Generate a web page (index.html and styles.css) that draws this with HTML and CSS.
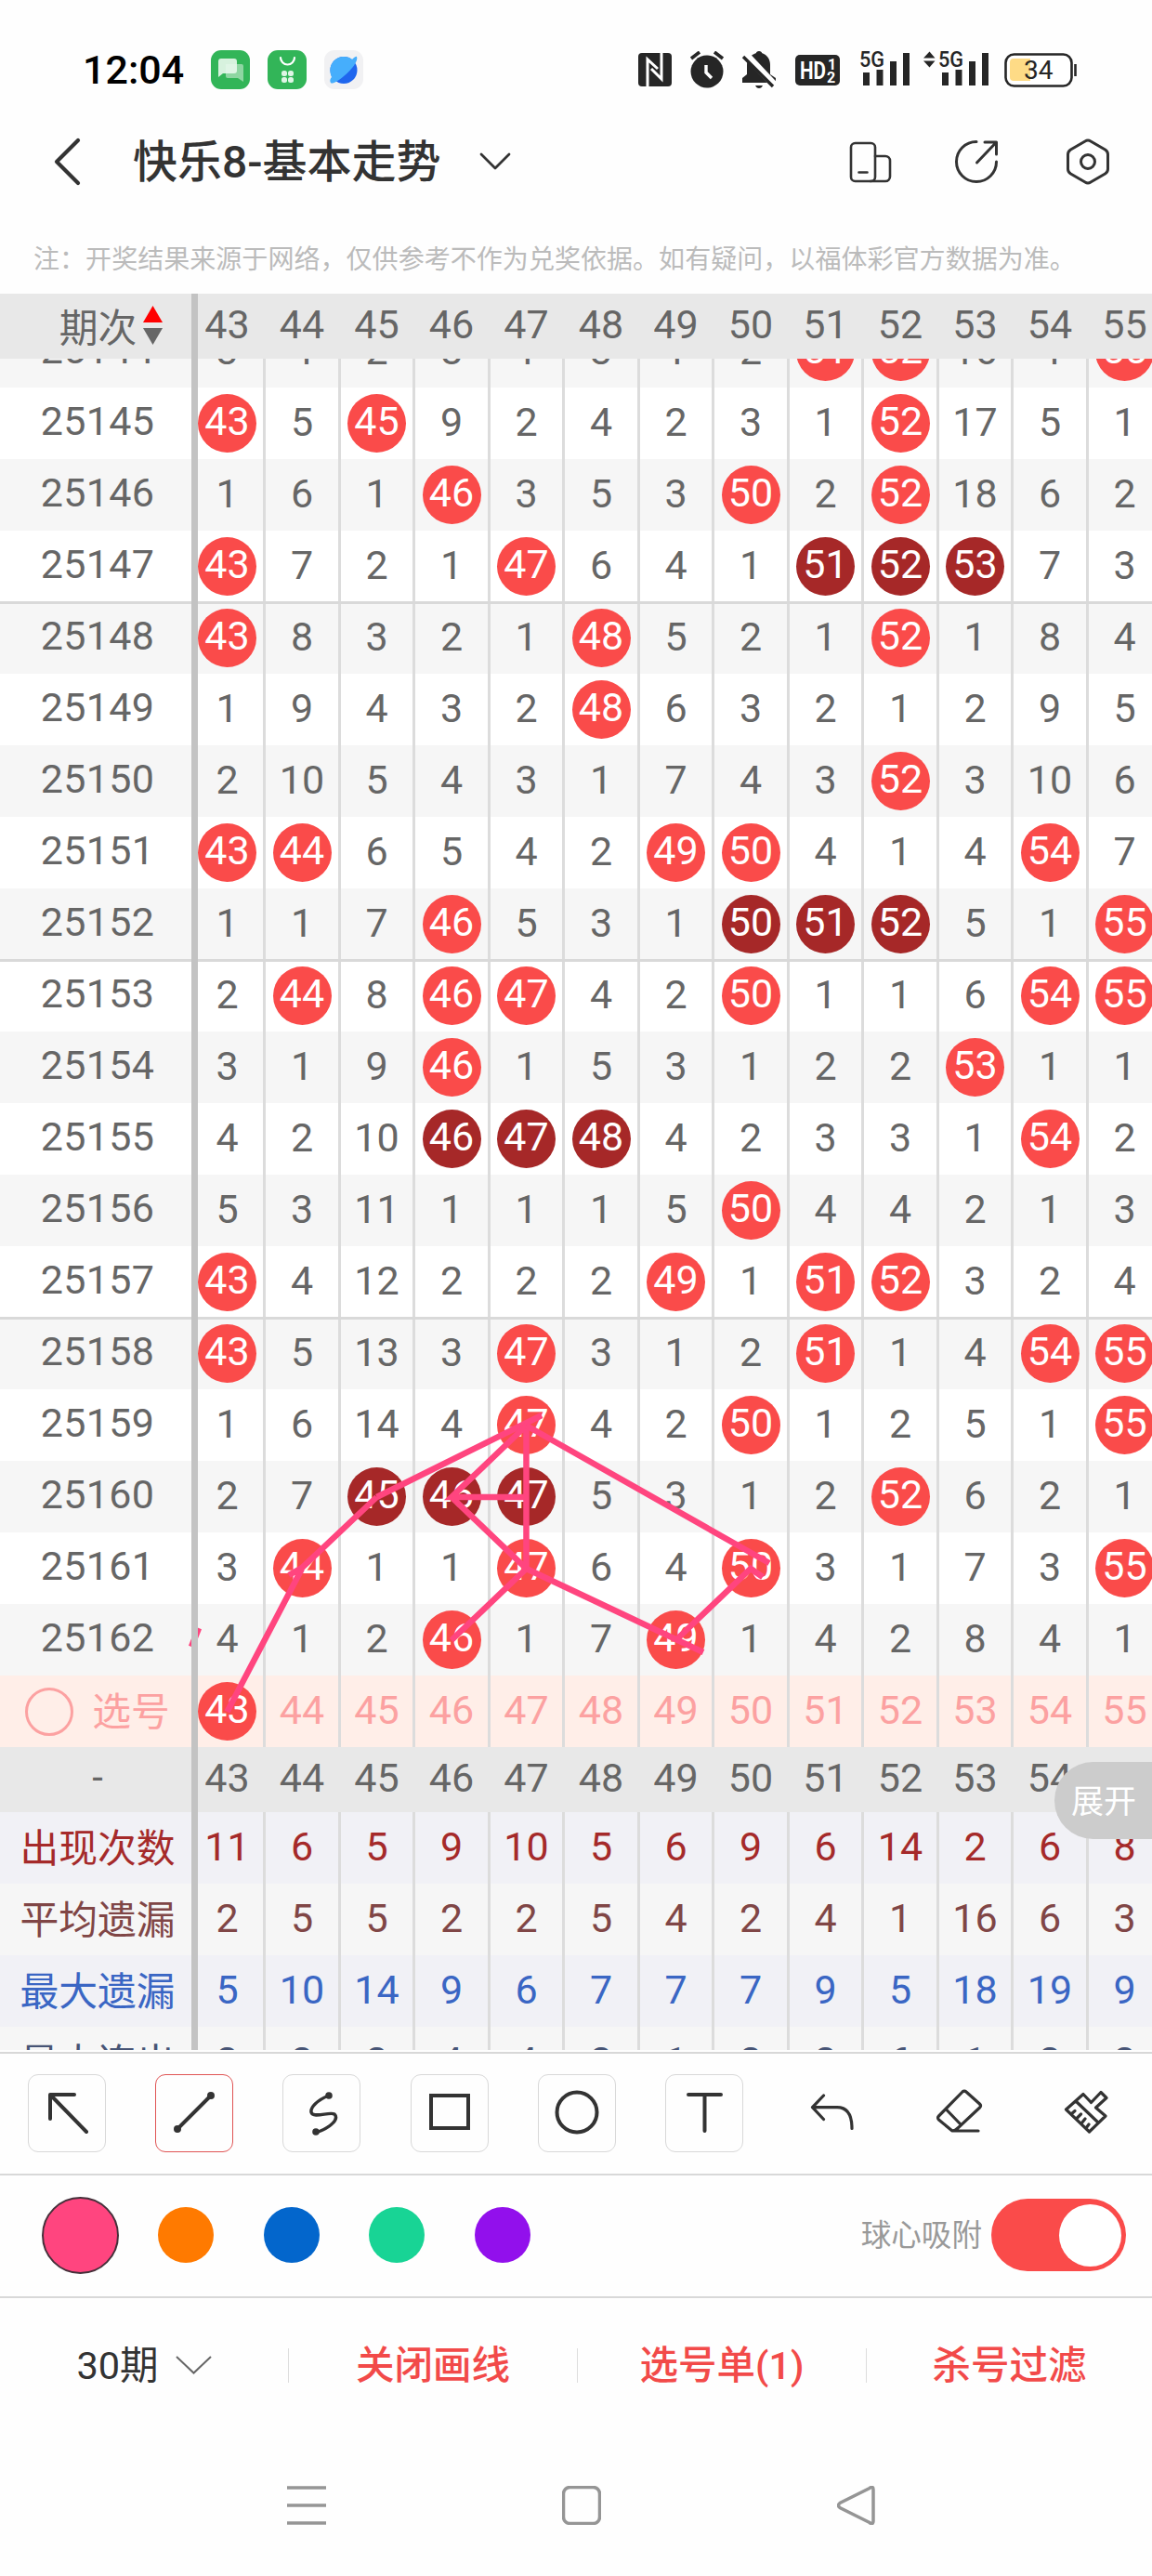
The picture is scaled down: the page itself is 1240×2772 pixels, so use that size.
FILE: index.html
```html
<!DOCTYPE html>
<html lang="zh-CN">
<head>
    <meta charset="UTF-8">
    <meta name="viewport" content="width=device-width, initial-scale=1.0">
    <title>快乐8-基本走势</title>
    <link rel="stylesheet" href="styles.css">
</head>
<body>
    <div class="status-bar">
        <span class="time">12:04</span>
        <div class="app-icons">
            <svg width="42" height="42" viewBox="0 0 42 42">
                <rect width="42" height="42" rx="11" fill="#32b558"/>
                <path d="M16 15h17a2 2 0 0 1 2 2v17l-6-4H18a2 2 0 0 1-2-2z" fill="#8ed6a2"/>
                <path d="M11 9h14a3 3 0 0 1 3 3v10a3 3 0 0 1-3 3H13l-5 4V12a3 3 0 0 1 3-3z" fill="#e9f8ed" opacity=".9"/>
            </svg>
            <svg width="42" height="42" viewBox="0 0 42 42">
                <rect width="42" height="42" rx="11" fill="#32b558"/>
                <path d="M14 8a7.4 7.4 0 0 0 15 0" fill="none" stroke="#fff" stroke-width="2.2" stroke-linecap="round"/>
                <g fill="#dff5e5">
                    <rect x="15" y="22" width="6" height="6" rx="2.5"/>
                    <rect x="22" y="22" width="6" height="6" rx="2.5"/>
                    <rect x="15" y="29" width="6" height="6" rx="2.5"/>
                    <rect x="22" y="29" width="6" height="6" rx="2.5"/>
                </g>
            </svg>
            <svg width="42" height="42" viewBox="0 0 42 42">
                <rect width="42" height="42" rx="11" fill="#f1f1f3"/>
                <circle cx="21" cy="21.5" r="14.5" fill="#1f66ee"/>
                <path d="M35 7c2 4-5 14-14 21-7 6-13 9-14 7-2-3 1-6 1-6-5-12 3-22 13-22 4 0 7 1 9 3 0 0 4-4 5-3z" fill="#46aefc"/>
            </svg>
        </div>
        <div class="system-icons">
            <svg class="nfc" width="36" height="36" viewBox="0 0 36 36">
                <rect width="36" height="36" rx="4" fill="#262626"/>
                <path d="M10 36V7l11 10M25 0v28L14 17" fill="none" stroke="#fff" stroke-width="3"/>
            </svg>
            <svg class="alarm" width="38" height="40" viewBox="0 0 38 40">
                <circle cx="19" cy="22" r="17.5" fill="#262626"/>
                <path d="M2 8l9-7M36 8l-9-7" stroke="#262626" stroke-width="3.6"/>
                <path d="M18 15v8l6 6" fill="none" stroke="#fff" stroke-width="3.4"/>
            </svg>
            <svg class="bell" width="38" height="40" viewBox="0 0 38 40">
                <path d="M19 0c2 0 3 1 3 2 6 2 9 7 9 13v10l6 4v5H1v-5l5-4V15c0-6 4-11 10-13 0-1 1-2 3-2zM15 37h8c-1 2-2 3-4 3s-3-1-4-3z" fill="#262626"/>
                <path d="M4 3l33 35" stroke="#fff" stroke-width="8"/>
                <path d="M2 6l32 32" stroke="#262626" stroke-width="3.4"/>
            </svg>
            <svg class="hd" width="48" height="33" viewBox="0 0 48 33">
                <rect width="48" height="33" rx="5" fill="#262626"/>
                <text x="5" y="26" font-size="26" textLength="28" lengthAdjust="spacingAndGlyphs">HD</text>
                <text x="35" y="16" font-size="16">1</text>
                <text x="34" y="30" font-size="16">2</text>
            </svg>
            <svg class="signal" width="56" height="40" viewBox="0 0 56 40">
                <text x="0" y="18" font-size="24" textLength="27" lengthAdjust="spacingAndGlyphs">5G</text>
                <path d="M4 24h7v14H4zM18.500 21h7v17h-7zM33 12h7v26h-7zM47 3h7v35h-7z" fill="#262626"/>
            </svg>
            <svg class="signal second" width="72" height="40" viewBox="0 0 72 40">
                <path d="M6.500 1.500l6 7H0zM6.500 18.500l6-7H0z" fill="#262626"/>
                <text x="16" y="18" font-size="24" textLength="27" lengthAdjust="spacingAndGlyphs">5G</text>
                <path d="M20 24h7v14h-7zM34.500 21h7v17h-7zM49 12h7v26h-7zM63 3h7v35h-7z" fill="#262626"/>
            </svg>
            <svg class="battery" width="79" height="37" viewBox="0 0 79 37">
                <rect x="1.500" y="1.500" width="71" height="34" rx="9" fill="#fff" stroke="#262626" stroke-width="2.600"/>
                <path d="M10 6h18v24H10a4 4 0 0 1-4-4V10a4 4 0 0 1 4-4z" fill="#fedb86"/>
                <path d="M76.500 12v13" stroke="#262626" stroke-width="2.600"/>
                <text x="21" y="28" font-size="28">34</text>
            </svg>
        </div>
    </div>

    <header class="title-bar">
        <svg class="back" width="30" height="52" viewBox="0 0 30 52">
            <path d="M26 3L3 26l23 23" fill="none" stroke="#333" stroke-width="4.200" stroke-linecap="round" stroke-linejoin="round"/>
        </svg>
        <h1>快乐8-基本走势</h1>
        <svg class="drop" width="34" height="20" viewBox="0 0 34 20">
            <path d="M2 2l15 15L32 2" fill="none" stroke="#333" stroke-width="2.800" stroke-linecap="round" stroke-linejoin="round"/>
        </svg>
        <div class="title-actions">
            <svg width="48" height="48" viewBox="0 0 48 48" fill="none" stroke="#333" stroke-width="2.600" stroke-linecap="round">
                <rect x="3" y="4" width="26" height="41" rx="4.500"/>
                <path d="M29 18h11a5 5 0 0 1 5 5v17a5 5 0 0 1-5 5H24M11.500 35.500h9"/>
            </svg>
            <svg class="share" width="48" height="48" viewBox="0 0 48 48" fill="none" stroke="#333" stroke-width="3" stroke-linecap="round" stroke-linejoin="round">
                <path d="M24 2.500A21.500 21.500 0 1 0 45.500 24M33 3h12.500v13M45 3.500L24.500 25"/>
            </svg>
            <svg width="48" height="50" viewBox="0 0 48 50" fill="none" stroke="#333" stroke-width="3">
                <path d="M21 3q3-2 6 0l15.500 9q3 2 3 5v16q0 3-3 5L27 47q-3 2-6 0L5.500 38q-3-2-3-5V17q0-3 3-5z"/>
                <circle cx="24" cy="25" r="7.500"/>
            </svg>
        </div>
    </header>

    <p class="notice">注：开奖结果来源于网络，仅供参考不作为兑奖依据。如有疑问，以福体彩官方数据为准。</p>

    <section class="chart">
        <div class="row head" id="head">
            <div class="label sort">期次
                <svg width="21" height="42" viewBox="0 0 21 42">
                    <path d="M10.500 0L21 18H0z" fill="#f00"/>
                    <path d="M10.500 42L21 24H0z" fill="#666"/>
                </svg>
            </div>
        </div>
        <div class="chart-body">
            <div class="rows" id="rows"></div>
            <svg class="drawing" width="1240" height="1494" viewBox="0 0 1240 1494">
                <path d="M244.500 1456L325 1302M311 1309L325 1301L405.500 1225M405.500 1225L583 1137"/>
                <path d="M566.500 1148L486 1225H566.500M566.500 1148V1302M486 1225L566.500 1302L486 1379"/>
                <path d="M566.500 1302L757 1392M727.500 1379L808 1302L821 1311M566.500 1148L828 1296"/>
                <path d="M206 1386L214 1366"/>
            </svg>
        </div>
        <div class="row head" id="foot"><div class="label">-</div></div>
        <div class="stats" id="stats"></div>
        <button class="expand">展开</button>
    </section>

    <section class="tools">
        <button class="tool"><svg width="60" height="60" viewBox="0 0 60 60"><path d="M12 36V10h26M12.500 10.500L51 50"/></svg></button>
        <button class="tool active"><svg width="60" height="60" viewBox="0 0 60 60"><path d="M12 47L48 11"/><circle class="dot" cx="12" cy="47" r="2"/><circle class="dot" cx="48" cy="11" r="2"/></svg></button>
        <button class="tool"><svg width="60" height="60" viewBox="0 0 60 60"><path d="M38 11C25 16 18 24 19 29c2 7 20-1 25 2 5 5-3 14-20 20" stroke-width="3.400"/><circle class="dot" cx="38" cy="11" r="1.800"/><circle class="dot" cx="24" cy="50" r="1.800"/></svg></button>
        <button class="tool"><svg width="60" height="60" viewBox="0 0 60 60"><path class="square" d="M10 11h40v35H10z"/></svg></button>
        <button class="tool"><svg width="60" height="60" viewBox="0 0 60 60"><circle cx="30" cy="29" r="21.500"/></svg></button>
        <button class="tool"><svg width="60" height="60" viewBox="0 0 60 60"><path d="M13 10h35M30.500 10v39"/></svg></button>
        <button class="tool plain"><svg width="60" height="60" viewBox="0 0 60 60"><path class="thin" d="M20.500 11L8.500 23.700l12 12.800M9 23.700h26c11 0 16 8 16 22.800"/></svg></button>
        <button class="tool plain"><svg width="60" height="60" viewBox="0 0 60 60"><path class="thin" d="M33 7q2-2 4 0l14.500 13q2 2 0 4L28 46q-3 3-6 3L7.500 37q-2-2 0-4zM16 26.500L31 42M22 49h28"/></svg></button>
        <button class="tool plain"><svg width="60" height="60" viewBox="0 0 60 60"><path class="thin" d="M26 9.500L7.500 26l25 24L50 33 39.500 24 51 13.500l-6-6-10.500 11zM18.500 17.500L41 39M13 31l4-3.500M18.500 36l5-5M24 41l4-5M29 46l3-4"/></svg></button>
    </section>

    <section class="colors">
        <div class="swatch picked pink"></div>
        <div class="swatch orange"></div>
        <div class="swatch blue"></div>
        <div class="swatch green"></div>
        <div class="swatch purple"></div>
        <span class="snap">球心吸附</span>
        <div class="toggle"></div>
    </section>

    <footer class="actions">
        <div class="action period">30期
            <svg width="39" height="20" viewBox="0 0 39 20"><path d="M1 1l18.500 17.500L38 1" fill="none" stroke="#666" stroke-width="2"/></svg>
        </div>
        <div class="action">关闭画线</div>
        <div class="action">选号单(1)</div>
        <div class="action last">杀号过滤</div>
    </footer>

    <nav class="nav-keys">
        <svg width="42" height="42" viewBox="0 0 42 42"><path d="M0 2h42M0 21h42M0 40h42"/></svg>
        <svg width="42" height="42" viewBox="0 0 42 42"><rect x="1.500" y="1.500" width="39" height="39" rx="7"/></svg>
        <svg width="42" height="42" viewBox="0 0 42 42"><path d="M35 2.500q4-3 4 1.500v34q0 4.500-4 1.500L3 23.500q-3-2.500 0-5z"/></svg>
    </nav>

    <script>
var first = 43;
var last = 55;

// one line per draw: issue number, then 43..55 (a hit shows its own number)
var draws = [
    [25144, 3, 4, 2, 8, 1, 3, 1, 2, 51, 52, 16, 4, 55],
    [25145, 43, 5, 45, 9, 2, 4, 2, 3, 1, 52, 17, 5, 1],
    [25146, 1, 6, 1, 46, 3, 5, 3, 50, 2, 52, 18, 6, 2],
    [25147, 43, 7, 2, 1, 47, 6, 4, 1, 51, 52, 53, 7, 3],
    [25148, 43, 8, 3, 2, 1, 48, 5, 2, 1, 52, 1, 8, 4],
    [25149, 1, 9, 4, 3, 2, 48, 6, 3, 2, 1, 2, 9, 5],
    [25150, 2, 10, 5, 4, 3, 1, 7, 4, 3, 52, 3, 10, 6],
    [25151, 43, 44, 6, 5, 4, 2, 49, 50, 4, 1, 4, 54, 7],
    [25152, 1, 1, 7, 46, 5, 3, 1, 50, 51, 52, 5, 1, 55],
    [25153, 2, 44, 8, 46, 47, 4, 2, 50, 1, 1, 6, 54, 55],
    [25154, 3, 1, 9, 46, 1, 5, 3, 1, 2, 2, 53, 1, 1],
    [25155, 4, 2, 10, 46, 47, 48, 4, 2, 3, 3, 1, 54, 2],
    [25156, 5, 3, 11, 1, 1, 1, 5, 50, 4, 4, 2, 1, 3],
    [25157, 43, 4, 12, 2, 2, 2, 49, 1, 51, 52, 3, 2, 4],
    [25158, 43, 5, 13, 3, 47, 3, 1, 2, 51, 1, 4, 54, 55],
    [25159, 1, 6, 14, 4, 47, 4, 2, 50, 1, 2, 5, 1, 55],
    [25160, 2, 7, 45, 46, 47, 5, 3, 1, 2, 52, 6, 2, 1],
    [25161, 3, 44, 1, 1, 47, 6, 4, 50, 3, 1, 7, 3, 55],
    [25162, 4, 1, 2, 46, 1, 7, 49, 1, 4, 2, 8, 4, 1]
];

var stats = [
    ['count', '出现次数', 11, 6, 5, 9, 10, 5, 6, 9, 6, 14, 2, 6, 8],
    ['average', '平均遗漏', 2, 5, 5, 2, 2, 5, 4, 2, 4, 1, 16, 6, 3],
    ['max', '最大遗漏', 5, 10, 14, 9, 6, 7, 7, 7, 9, 5, 18, 19, 9],
    ['streak', '最大连出', 2, 2, 2, 4, 4, 2, 1, 2, 2, 6, 1, 2, 2]
];

function cell(value, ball) {
    return '<div class="cell"><span class="' + (ball || 'num') + '">' + value + '</span></div>';
}

// three or more hits side by side are drawn dark
function inRun(values, i) {
    var a = i, b = i;
    while (values[a - 1] >= first) a--;
    while (values[b + 1] >= first) b++;
    return b - a >= 2;
}

var html = '';
draws.forEach(function (draw, row) {
    var values = draw.slice(1);
    var groupEnd = draw[0] % 5 == 2 && row < draws.length - 1;
    html += '<div class="row' + (draw[0] % 2 ? '' : ' even') + (groupEnd ? ' group-end' : '') + '">';
    html += '<div class="label"><span class="num">' + draw[0] + '</span></div>';
    values.forEach(function (v, i) {
        html += cell(v, v >= first ? (inRun(values, i) ? 'ball dark' : 'ball') : '');
    });
    html += '</div>';
});

var numbers = '';
var picks = '';
for (var n = first; n <= last; n++) {
    numbers += cell(n);
    picks += cell(n, n == 43 ? 'ball' : '');
}
html += '<div class="row pick"><div class="label"><i class="ring"></i>选号</div>' + picks + '</div>';
document.getElementById('rows').innerHTML = html;
document.getElementById('head').insertAdjacentHTML('beforeend', numbers);
document.getElementById('foot').insertAdjacentHTML('beforeend', numbers);

document.getElementById('stats').innerHTML = stats.map(function (s) {
    return '<div class="row ' + s[0] + '"><div class="label">' + s[1] + '</div>' +
        s.slice(2).map(function (v) { return cell(v); }).join('') + '</div>';
}).join('');
    </script>
</body>
</html>
```
FILE: styles.css
```css
body {
    font-family: Roboto, "Noto Sans CJK SC", sans-serif;
    margin: 0;
    width: 1240px;
    height: 2772px;
    overflow: hidden;
    background-color: #fefefe;
    color: #333;
}

svg {
    display: block;
    flex: none;
}

button {
    font-family: inherit;
    padding: 0;
}

/* status bar */
.status-bar {
    display: flex;
    align-items: center;
    height: 98px;
    padding: 26px 80px 0 89px;
}

.time {
    width: 138px;
    font-size: 43px;
    font-weight: 500;
    line-height: 50px;
    color: #000;
}

.app-icons {
    display: flex;
    gap: 19px;
    margin-right: auto;
}

.system-icons {
    display: flex;
    align-items: center;
}

.system-icons text {
    font-weight: 500;
    fill: #262626;
}

.alarm {
    margin-left: 19px;
}

.bell {
    margin-left: 18px;
}

.hd {
    margin-left: 20px;
}

.system-icons .hd text {
    font-weight: 700;
    fill: #fff;
}

.signal {
    margin-left: 21px;
    margin-top: -3px;
}

.second {
    margin-left: 13px;
}

.battery {
    margin-left: 15px;
}

.system-icons .battery text {
    font-weight: 400;
}

/* title */
.title-bar {
    display: flex;
    align-items: center;
    height: 100px;
    padding: 0 45px 0 58px;
}

.title-bar h1 {
    margin: 2px 41px 0 55px;
    font-size: 48px;
    font-weight: 500;
    line-height: 70px;
    white-space: nowrap;
}

.title-actions {
    display: flex;
    align-items: center;
    margin-left: auto;
}

.share {
    margin: 0 72px 0 66px;
}

.notice {
    box-sizing: border-box;
    height: 92px;
    margin: 0;
    padding: 17px 0 0 36px;
    font-family: "Noto Sans CJK SC", sans-serif;
    font-size: 28.05px;
    line-height: 72px;
    color: #bbb;
    white-space: nowrap;
}

/* trend chart */
.chart {
    position: relative;
    height: 1890px;
    overflow: hidden;
    font-size: 43px;
    color: #666;
}

.chart::after {
    content: "";
    position: absolute;
    top: 0;
    bottom: 0;
    left: 206px;
    width: 7px;
    background-color: #c3c3c3;
    z-index: 3;
}

.row {
    position: relative;
    display: flex;
    height: 77px;
    background-color: #fff;
}

.row.even {
    background-color: #f6f6f6;
}

.row.group-end::after {
    content: "";
    position: absolute;
    left: 0;
    right: 0;
    bottom: -2px;
    height: 3px;
    background-color: #d9d9d9;
    z-index: 1;
}

.label {
    box-sizing: border-box;
    display: flex;
    align-items: center;
    justify-content: center;
    flex: none;
    width: 206px;
    margin-right: -3.25px;
    padding: 0 0 5px 4px;
    font-size: 41.8px;
    white-space: nowrap;
}

.label .num {
    font-size: 43px;
    letter-spacing: 0.3px;
    padding-bottom: 0;
}

.cell {
    box-sizing: border-box;
    display: flex;
    align-items: center;
    justify-content: center;
    flex: none;
    width: 80.5px;
    border-left: 3px solid #dcdcdc;
}

.label + .cell {
    border-color: transparent;
}

.num {
    padding-bottom: 4px;
}

.ball {
    box-sizing: border-box;
    width: 63px;
    height: 63px;
    padding-bottom: 4px;
    border-radius: 50%;
    background-color: #fa4b4a;
    color: #fff;
    line-height: 59px;
    text-align: center;
}

.ball.dark {
    background-color: #a62828;
}

.head {
    height: 70px;
    background-color: #e8e8e8;
}

.head .cell {
    border-color: transparent;
}

.label.sort {
    gap: 7px;
    padding-left: 33px;
    padding-bottom: 3px;
}

.chart-body {
    position: relative;
    height: 1494.4px;
    overflow: hidden;
}

.rows {
    margin-top: -45.6px;
}

.drawing {
    position: absolute;
    top: 0;
    left: 0;
    fill: none;
    stroke: #ff457f;
    stroke-width: 6.5;
    z-index: 2;
}

.row.pick {
    background-color: #ffeee8;
    color: #fca1a1;
}

.pick .label {
    gap: 20px;
}

.ring {
    box-sizing: border-box;
    width: 52px;
    height: 52px;
    margin-top: 5px;
    border: 3px solid #fca1a1;
    border-radius: 50%;
}

.stats {
    height: 255.6px;
    overflow: hidden;
}

.stats .row {
    background-color: #f6f6f6;
}

.stats .count {
    background-color: #f1f1f6;
    color: #a52a2a;
}

.stats .average {
    color: #804646;
}

.stats .max {
    background-color: #f1f1f6;
    color: #3a66c4;
}

.stats .streak {
    color: #475475;
}

.expand {
    position: absolute;
    right: 0;
    top: 1580px;
    width: 105px;
    height: 83px;
    padding: 0 0 4px 1px;
    border: none;
    border-radius: 42px 0 0 42px;
    background-color: #ccc;
    color: #fff;
    font-size: 35px;
    z-index: 4;
}

/* drawing tools */
.tools {
    display: grid;
    grid-template-columns: repeat(9, 1fr);
    place-items: center;
    height: 128px;
    margin-top: 2px;
    padding: 0 1px 1px 3px;
    border-top: 2px solid #d8d8d8;
    border-bottom: 2px solid #d8d8d8;
}

.tool {
    display: flex;
    align-items: center;
    justify-content: center;
    box-sizing: border-box;
    width: 84px;
    height: 84px;
    border: 1px solid #d8d8d8;
    border-radius: 11px;
    background: none;
}

.tool.active {
    border-color: #e05555;
}

.tool.plain {
    border-color: transparent;
}

.tool svg {
    fill: none;
    stroke: #333;
    stroke-width: 4;
    stroke-linecap: round;
    stroke-linejoin: round;
}

.tool .dot {
    fill: #333;
}

.tool .thin {
    stroke-width: 3.2;
}

.tool .square {
    stroke-linejoin: miter;
}

.colors {
    display: flex;
    align-items: center;
    height: 128px;
    padding: 0 28px 2px 45px;
    border-bottom: 2px solid #d8d8d8;
}

.swatch {
    width: 60px;
    height: 60px;
    margin-right: 53.5px;
    border-radius: 50%;
}

.swatch.picked {
    box-sizing: border-box;
    width: 83px;
    height: 83px;
    margin-right: 42px;
    border: 2px solid #45303a;
}

.pink {
    background-color: #ff457f;
}

.orange {
    background-color: #ff7a00;
}

.blue {
    background-color: #0366cc;
}

.green {
    background-color: #18d495;
}

.purple {
    background-color: #9210ec;
}

.snap {
    margin: 0 10px 5px auto;
    font-size: 32.6px;
    color: #999;
}

.toggle {
    display: flex;
    align-items: center;
    justify-content: flex-end;
    box-sizing: border-box;
    width: 145px;
    height: 78px;
    padding-right: 5px;
    border-radius: 39px;
    background-color: #fa4b4a;
}

.toggle::after {
    content: "";
    width: 67px;
    height: 67px;
    border-radius: 50%;
    background-color: #fff;
}

/* bottom actions */
.actions {
    display: grid;
    grid-template-columns: 311px 311px 311px 307px;
    align-items: center;
    height: 145px;
}

.action {
    display: flex;
    align-items: center;
    justify-content: center;
    height: 36px;
    padding-bottom: 1px;
    border-right: 1px solid #ddd;
    font-size: 41.5px;
    font-weight: 500;
    line-height: 33px;
    color: #f24a49;
}

.action.last {
    border-right: none;
}

.action.period {
    gap: 18px;
    font-weight: 400;
    color: #333;
}

.nav-keys {
    display: grid;
    grid-template-columns: repeat(3, 296px);
    place-items: center;
    height: 155px;
    padding-left: 182px;
    fill: none;
    stroke: #959595;
    stroke-width: 3.5;
}
```
